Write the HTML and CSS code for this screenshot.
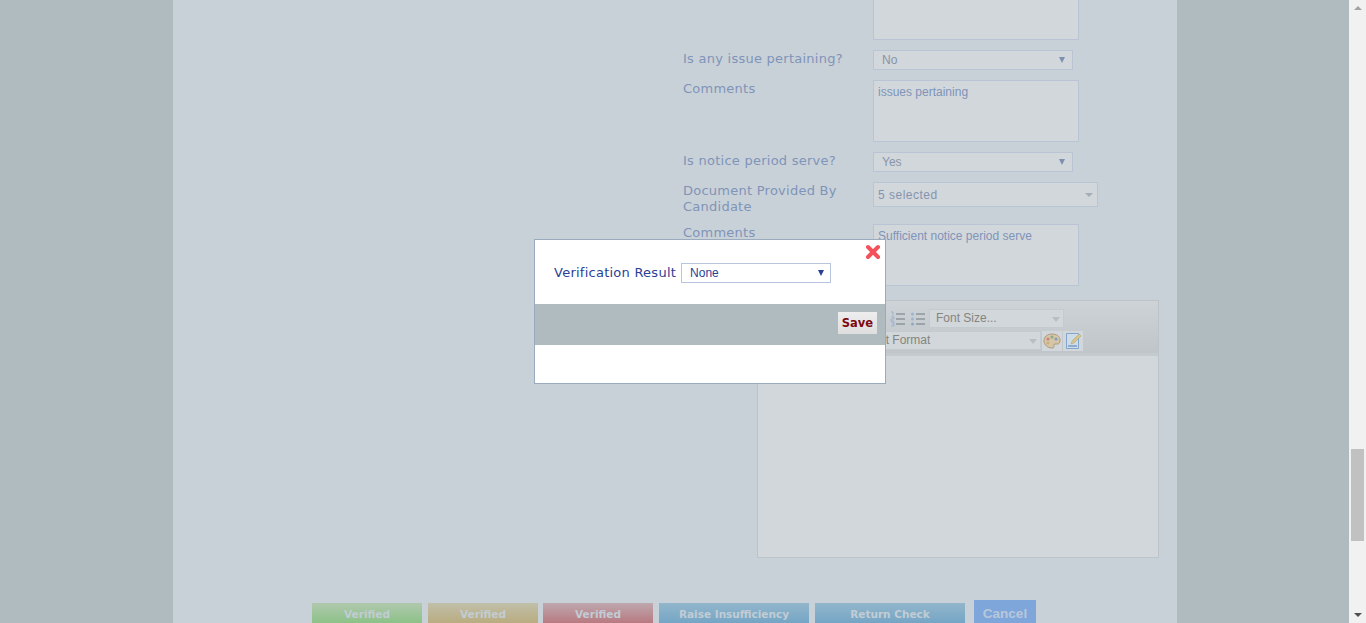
FILE: index.html
```html
<!DOCTYPE html>
<html lang="en">
<head>
    <meta charset="UTF-8">
    <title>Verification</title>
    <link rel="stylesheet" href="styles.css">
</head>
<body>
    <div class="page">
        <div class="main">
            <div class="sheet">
                <div class="form">
                    <div class="row row-first">
                        <div class="label"></div>
                        <div class="field textarea textarea-top"></div>
                    </div>
                    <div class="row">
                        <div class="label">Is any issue pertaining?</div>
                        <div class="field select">No<span class="arrow"></span></div>
                    </div>
                    <div class="row">
                        <div class="label">Comments</div>
                        <div class="field textarea">issues pertaining</div>
                    </div>
                    <div class="row">
                        <div class="label">Is notice period serve?</div>
                        <div class="field select">Yes<span class="arrow"></span></div>
                    </div>
                    <div class="row row-doc">
                        <div class="label">Document Provided By Candidate</div>
                        <div class="field multi">5 selected<span class="caret"></span></div>
                    </div>
                    <div class="row row-last">
                        <div class="label">Comments</div>
                        <div class="field textarea">Sufficient notice period serve</div>
                    </div>
                </div>

                <div class="editor">
                    <div class="toolbar">
                        <div class="tool-line">
                            <svg class="list-icon" width="16" height="16" viewBox="0 0 16 16">
                                <path d="M6 3h9M6 8h9M6 13h9" stroke="#6f7a80" stroke-width="1" fill="none"/>
                                <path d="M1 1h2v4M1 6h3v2H1v2h3M1 11h3v4H1M2 13h2" stroke="#9db3cf" stroke-width="1" fill="none"/>
                            </svg>
                            <svg class="list-icon" width="16" height="16" viewBox="0 0 16 16">
                                <path d="M6 3h9M6 8h9M6 13h9" stroke="#6f7a80" stroke-width="1" fill="none"/>
                                <circle cx="2.5" cy="3" r="1.5" fill="#9db3cf"/>
                                <circle cx="2.5" cy="8" r="1.5" fill="#9db3cf"/>
                                <circle cx="2.5" cy="13" r="1.5" fill="#8fa6c4"/>
                            </svg>
                            <div class="tool-select tool-size">Font Size...<span class="tool-caret"></span></div>
                        </div>
                        <div class="tool-line">
                            <div class="tool-select tool-format">Font Format<span class="tool-caret"></span></div>
                            <div class="tool-btn">
                                <svg class="tool-icon" width="18" height="16" viewBox="0 0 18 16">
                                    <path d="M9 1C4 1 1 4 1 8c0 4 4 7 8 7 2 0 2-1 2-2s-1-2 1-2h2c2 0 3-1 3-4 0-4-4-6-8-6z" fill="#d8c29c" stroke="#a88a64"/>
                                    <circle cx="5" cy="6" r="1.6" fill="#c96f60"/>
                                    <circle cx="9" cy="4" r="1.6" fill="#7ba36f"/>
                                    <circle cx="13" cy="6" r="1.6" fill="#6f8fc0"/>
                                    <circle cx="5" cy="10" r="1.6" fill="#c9a860"/>
                                </svg>
                            </div>
                            <div class="tool-btn">
                                <svg class="tool-icon" width="17" height="18" viewBox="0 0 17 18">
                                    <path d="M1.5 1.5h12v15h-12z" fill="#cfdcea" stroke="#6f9bc8"/>
                                    <path d="M3 13h9v2H3z" fill="#7ba3cc"/>
                                    <path d="M6 12l1-3 7-7 2 2-7 7z" fill="#d8c27c" stroke="#a89a64" stroke-width=".6"/>
                                </svg>
                            </div>
                        </div>
                    </div>
                    <div class="editor-body"></div>
                </div>

                <div class="actions">
                    <div class="btn btn-green">Verified</div>
                    <div class="btn btn-amber">Verified</div>
                    <div class="btn btn-red">Verified</div>
                    <div class="btn btn-blue btn-raise">Raise Insufficiency</div>
                    <div class="btn btn-blue btn-return">Return Check</div>
                    <div class="btn-cancel">Cancel</div>
                </div>
            </div>
        </div>
        <div class="scrollbar">
            <span class="scroll-up"></span>
            <div class="scroll-track"><div class="scroll-thumb"></div></div>
            <span class="scroll-down"></span>
        </div>
    </div>

    <div class="modal">
        <svg class="close" width="16" height="16" viewBox="0 0 16 16">
            <path d="M3 3l10 10M13 3L3 13" stroke="#f4525a" stroke-width="4" stroke-linecap="round"/>
        </svg>
        <div class="modal-body">
            <span class="modal-label">Verification Result</span>
            <div class="modal-select">None<span class="modal-arrow"></span></div>
        </div>
        <div class="modal-band">
            <div class="save">Save</div>
        </div>
    </div>
</body>
</html>
```

FILE: styles.css
```css
html, body {
    margin: 0;
    height: 100%;
    overflow: hidden;
}

body {
    font-family: "DejaVu Sans", sans-serif;
    background-color: #b0bbc0;
}

.page {
    display: flex;
    height: 623px;
}

.main {
    width: 1349px;
    padding-left: 173px;
    box-sizing: border-box;
}

.sheet {
    width: 1004px;
    height: 623px;
    background-color: #c9d1d8;
    overflow: hidden;
}

.form {
    margin-left: 510px;
    margin-top: -22px;
}

.row {
    display: flex;
    margin-bottom: 10px;
}

.row-doc {
    margin-bottom: 9px;
}

.row-last {
    margin-bottom: 14px;
}

.label {
    width: 190px;
    padding-top: 1px;
    padding-right: 20px;
    box-sizing: border-box;
    font-size: 13px;
    line-height: 16px;
    letter-spacing: .25px;
    color: #7f94b9;
}

.field {
    box-sizing: border-box;
    border: 1px solid #b9c4d4;
    background-color: #d2d7db;
    font-family: "Liberation Sans", sans-serif;
    font-size: 12px;
    color: #7f94b9;
}

.textarea {
    width: 206px;
    height: 62px;
    padding: 4px;
}

.select {
    position: relative;
    width: 200px;
    height: 20px;
    padding: 2px 8px;
    color: #8894a8;
}

.arrow {
    position: absolute;
    right: 7px;
    top: 6px;
    border-left: 3px solid transparent;
    border-right: 3px solid transparent;
    border-top: 6px solid #7f8fb0;
}

.multi {
    position: relative;
    width: 225px;
    height: 25px;
    padding: 5px 4px;
    letter-spacing: .5px;
    color: #8494ae;
}

.caret {
    position: absolute;
    right: 4px;
    top: 10px;
    border-left: 4px solid transparent;
    border-right: 4px solid transparent;
    border-top: 4px solid #a5adb8;
}

.editor {
    width: 402px;
    height: 258px;
    margin-left: 584px;
    box-sizing: border-box;
    border: 1px solid #bcc4c8;
    background-color: #d2d7db;
}

.toolbar {
    height: 55px;
    box-sizing: border-box;
    border-bottom: 3px solid #c4cbce;
    background: linear-gradient(#ced3d7, #bfc5c8);
    padding: 8px 0 0 130px;
}

.tool-line {
    display: flex;
    align-items: center;
    height: 19px;
    margin-bottom: 3px;
}

.list-icon {
    margin-left: 2px;
    margin-right: 2px;
}

.tool-select {
    position: relative;
    box-sizing: border-box;
    height: 19px;
    border: 1px solid #c4cbce;
    background-color: #d2d7db;
    font-family: "Liberation Sans", sans-serif;
    font-size: 12px;
    line-height: 16px;
    color: #85857c;
}

.tool-size {
    width: 135px;
    margin-left: 1px;
    padding-left: 6px;
}

.tool-format {
    width: 183px;
    margin-left: -30px;
    padding-left: 6px;
    line-height: 17px;
}

.tool-caret {
    position: absolute;
    right: 3px;
    top: 7px;
    border-left: 4px solid transparent;
    border-right: 4px solid transparent;
    border-top: 5px solid #b8bfc3;
}

.tool-btn {
    width: 20px;
    height: 20px;
    margin-left: 1px;
    display: flex;
    align-items: center;
    justify-content: center;
    background-color: #d2d7db;
}

.tool-icon {
    opacity: .8;
}

.actions {
    display: flex;
    align-items: flex-start;
    margin-top: 42px;
    margin-left: 139px;
}

.btn {
    box-sizing: border-box;
    height: 24px;
    margin-top: 3px;
    margin-right: 6px;
    text-align: center;
    font-family: "DejaVu Sans", sans-serif;
    font-weight: bold;
    font-size: 10.5px;
    line-height: 23px;
    color: #c2ccd4;
}

.btn-green {
    width: 110px;
    background: linear-gradient(#b0c8ae, #85c080);
}

.btn-amber {
    width: 110px;
    margin-right: 5px;
    background: linear-gradient(#c0bfa9, #b8a878);
}

.btn-red {
    width: 110px;
    background: linear-gradient(#bda8ae, #b87078);
}

.btn-blue {
    background: linear-gradient(#92b6cb, #6fa2c4);
}

.btn-raise {
    width: 150px;
}

.btn-return {
    width: 150px;
    margin-right: 9px;
}

.btn-cancel {
    width: 62px;
    height: 27px;
    background-color: #7fa6da;
    text-align: center;
    font-family: "Liberation Sans", sans-serif;
    font-weight: bold;
    font-size: 13.5px;
    line-height: 27px;
    color: #b8c8dc;
}

.scrollbar {
    width: 17px;
    height: 623px;
    background-color: #f1f1f1;
    display: flex;
    flex-direction: column;
    align-items: center;
}

.scroll-up {
    margin-top: 6px;
    border-left: 4px solid transparent;
    border-right: 4px solid transparent;
    border-bottom: 4px solid #a3a3a3;
}

.scroll-track {
    flex: 1;
    width: 100%;
}

.scroll-thumb {
    width: 13px;
    height: 92px;
    margin: 439px auto 0;
    background-color: #c1c1c1;
}

.scroll-down {
    margin-bottom: 6px;
    border-left: 4px solid transparent;
    border-right: 4px solid transparent;
    border-top: 4px solid #505050;
}

.modal {
    position: absolute;
    left: 534px;
    top: 239px;
    width: 352px;
    height: 145px;
    box-sizing: border-box;
    border: 1px solid #9aabbd;
    background-color: #fff;
}

.close {
    position: absolute;
    right: 4px;
    top: 4px;
}

.modal-body {
    display: flex;
    align-items: center;
    height: 64px;
    padding-left: 19px;
    box-sizing: border-box;
}

.modal-label {
    margin-right: 5px;
    font-size: 13px;
    letter-spacing: .25px;
    color: #2a3f96;
}

.modal-select {
    position: relative;
    box-sizing: border-box;
    width: 150px;
    height: 20px;
    margin-top: 1px;
    padding: 2px 8px;
    border: 1px solid #b9c4de;
    font-family: "Liberation Sans", sans-serif;
    font-size: 12px;
    color: #2a3f96;
}

.modal-arrow {
    position: absolute;
    right: 6px;
    top: 6px;
    border-left: 3px solid transparent;
    border-right: 3px solid transparent;
    border-top: 6px solid #2a3f96;
}

.modal-band {
    display: flex;
    justify-content: flex-end;
    height: 41px;
    padding: 8px 8px 0 0;
    box-sizing: border-box;
    background-color: #b0bbc0;
}

.save {
    width: 39px;
    height: 22px;
    background: linear-gradient(#eeeeee, #dedede);
    text-align: center;
    font-family: "DejaVu Sans", sans-serif;
    font-weight: bold;
    font-size: 11.5px;
    line-height: 22px;
    color: #7d0a12;
}
```
